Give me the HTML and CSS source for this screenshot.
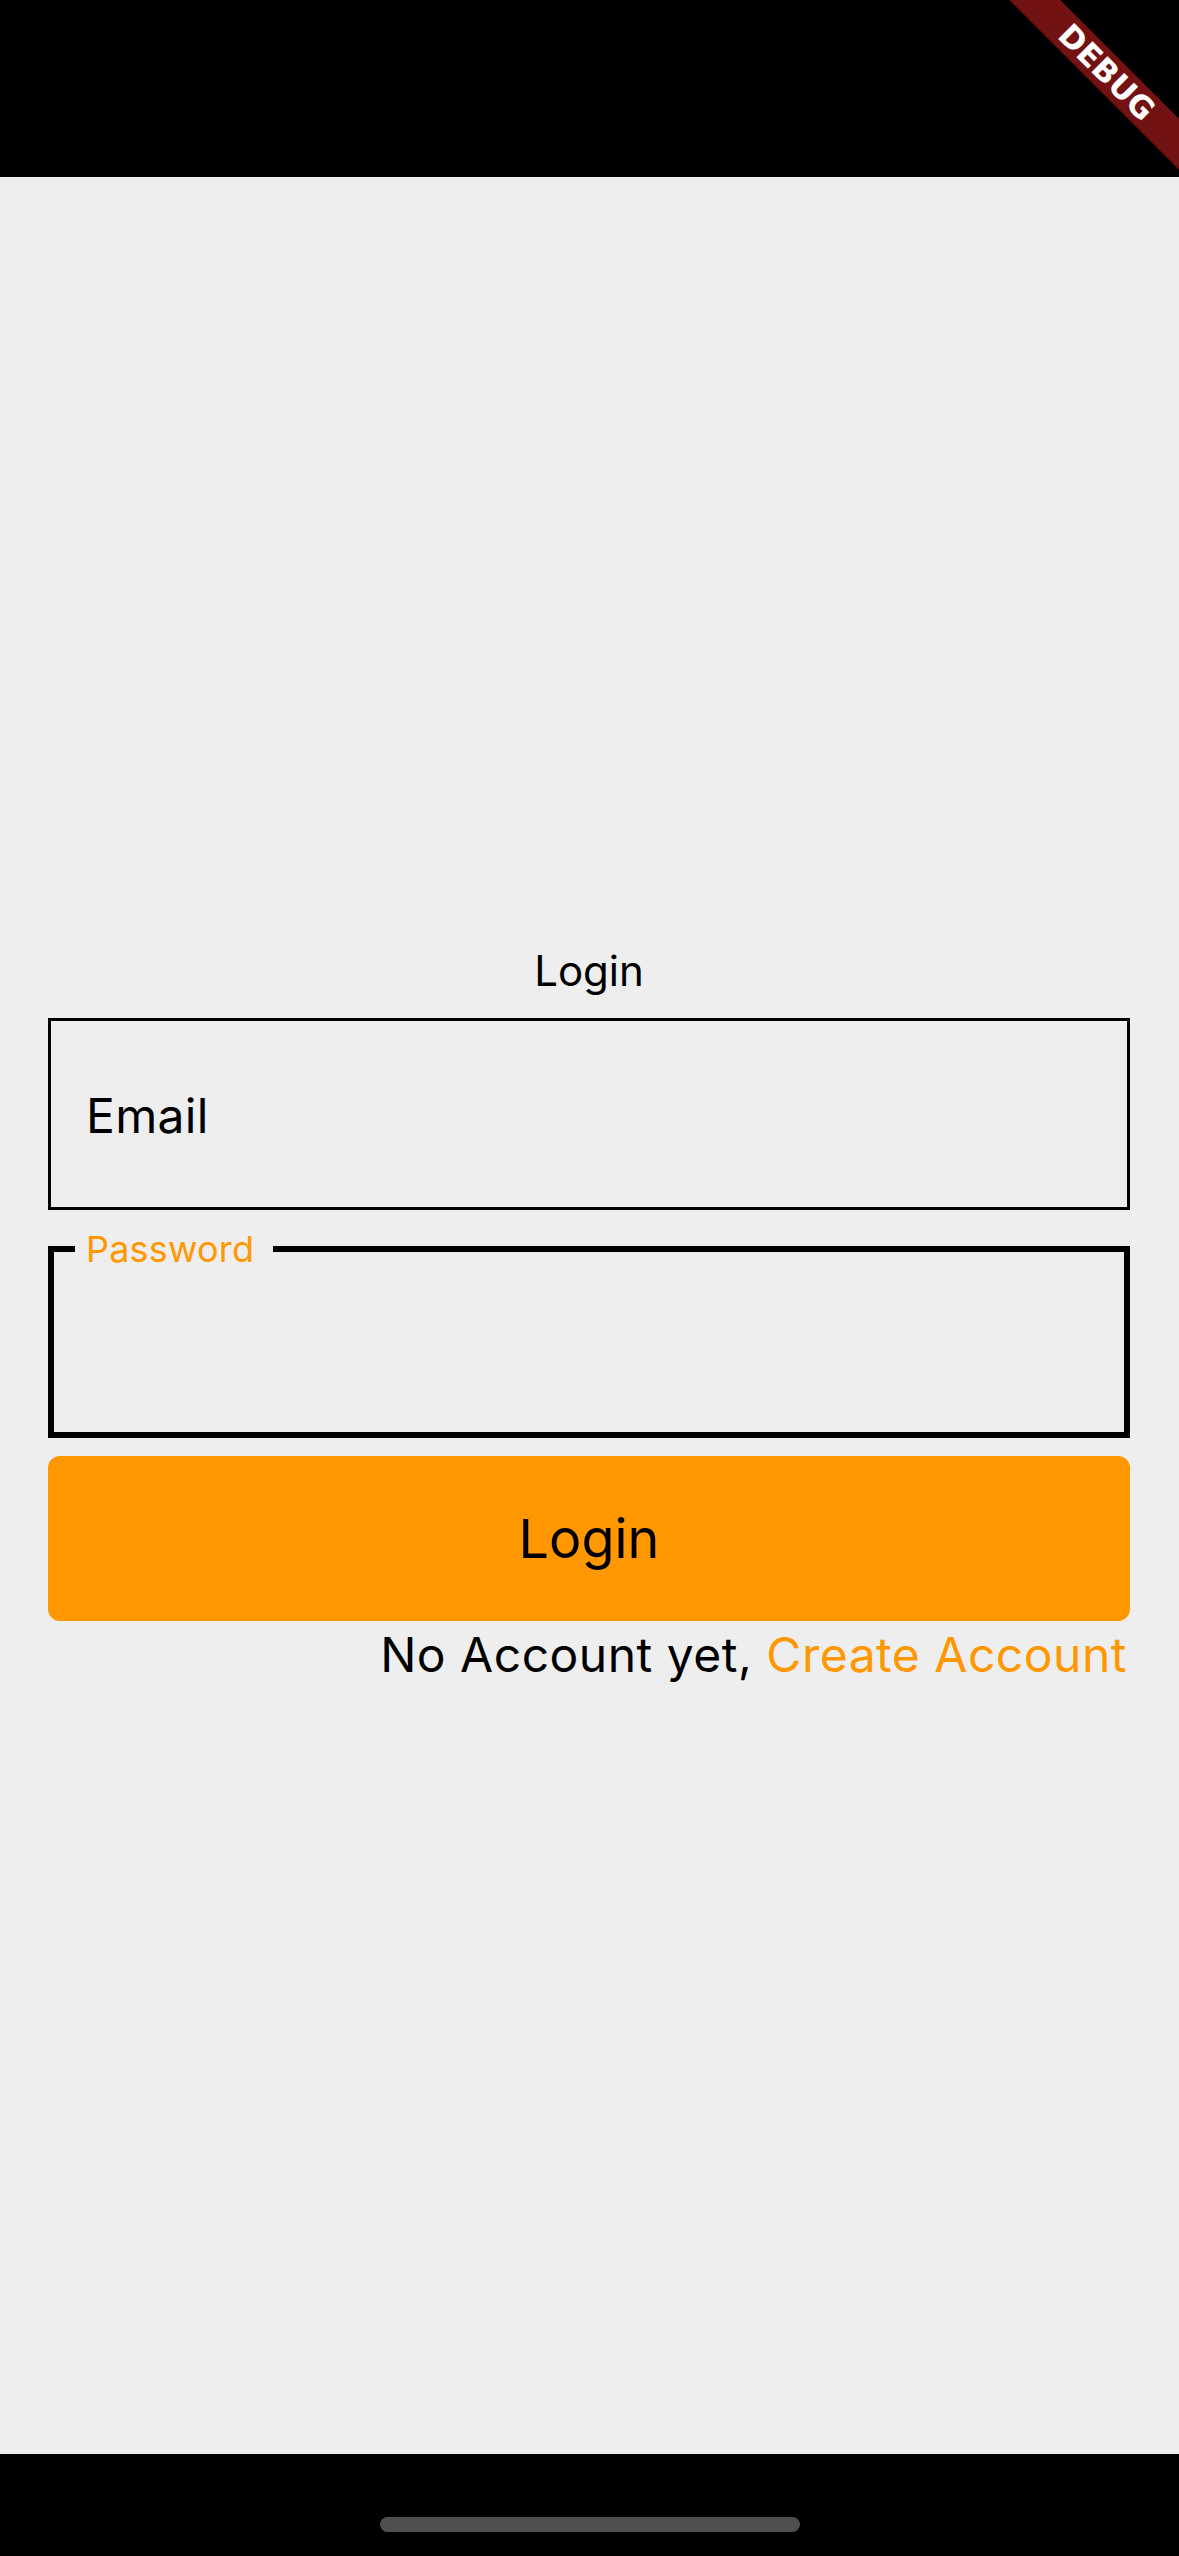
FILE: index.html
```html
<!DOCTYPE html>
<html lang="en">
<head>
<meta charset="utf-8">
<title>Login</title>
<link rel="stylesheet" href="styles.css">
</head>
<body>
<div class="screen">
  <div class="status-bar"></div>
  <main class="content">
    <form class="login-form">
      <h1 class="title">Login</h1>
      <div class="field">
        <span class="placeholder">Email</span>
      </div>
      <div class="field field-focused">
        <span class="float-label">Password</span>
      </div>
      <button type="button" class="login-button">Login</button>
      <p class="signup">No Account yet, <span class="signup-link">Create Account</span></p>
    </form>
  </main>
  <div class="home-bar"><div class="home-indicator"></div></div>
  <div class="banner-anchor"><div class="banner">DEBUG</div></div>
</div>
</body>
</html>
```
FILE: styles.css
```css
html, body {
  margin: 0;
  padding: 0;
  overflow: hidden;
  background: #000;
}

.screen {
  position: relative;
  width: 1179px;
  height: 2556px;
  display: flex;
  flex-direction: column;
  overflow: hidden;
  font-family: Inter, "Noto Sans", "Liberation Sans", sans-serif;
  color: #000;
}

.status-bar {
  height: 177px;
  background: #000;
  flex: none;
}

.content {
  flex: 1;
  background: #eeeeee;
  padding: 769px 49px 0 48px;
}

.login-form {
  display: flex;
  flex-direction: column;
  margin: 0;
}

.title {
  margin: 0 0 22px;
  font-size: 42px;
  line-height: 50px;
  font-weight: 400;
  text-align: center;
}

.field {
  position: relative;
  height: 192px;
  box-sizing: border-box;
  border: 3px solid #000;
  display: flex;
  align-items: center;
  padding: 3px 0 0 35px;
}

.placeholder {
  font-size: 48px;
  line-height: 58px;
  letter-spacing: 0.3px;
}

.field-focused {
  margin-top: 36px;
  border-width: 6px;
}

.float-label {
  position: absolute;
  left: 21px;
  top: -21px;
  padding: 0 19px 0 11px;
  background: #eeeeee;
  color: #ff9800;
  font-size: 36px;
  line-height: 36px;
  letter-spacing: 0.2px;
}

.login-button {
  margin-top: 18px;
  height: 165px;
  border: 0;
  border-radius: 12px;
  background: #ff9800;
  color: #000;
  font-family: inherit;
  font-size: 54px;
  line-height: 64px;
  padding: 0;
}

.signup {
  margin: 5px 0 0;
  padding-right: 3px;
  text-align: right;
  font-size: 48px;
  line-height: 58px;
  letter-spacing: 0.5px;
}

.signup-link {
  color: #ff9800;
}

.home-bar {
  height: 102px;
  background: #000;
  flex: none;
  display: flex;
  justify-content: center;
  padding-top: 63px;
  box-sizing: border-box;
}

.home-indicator {
  width: 420px;
  height: 15px;
  border-radius: 8px;
  background: #4f4f4f;
}

.banner-anchor {
  position: absolute;
  top: 0;
  right: 0;
  width: 0;
  height: 0;
}

.banner {
  position: absolute;
  left: -120px;
  top: 84px;
  width: 240px;
  height: 36px;
  transform-origin: 120px -84px;
  transform: rotate(45deg);
  background: #731212;
  box-shadow: 0 0 6px rgba(0, 0, 0, 0.5);
  color: #fff;
  font-family: "DejaVu Sans", "Liberation Sans", sans-serif;
  font-weight: 900;
  font-size: 31px;
  line-height: 36px;
  text-align: center;
}
```
